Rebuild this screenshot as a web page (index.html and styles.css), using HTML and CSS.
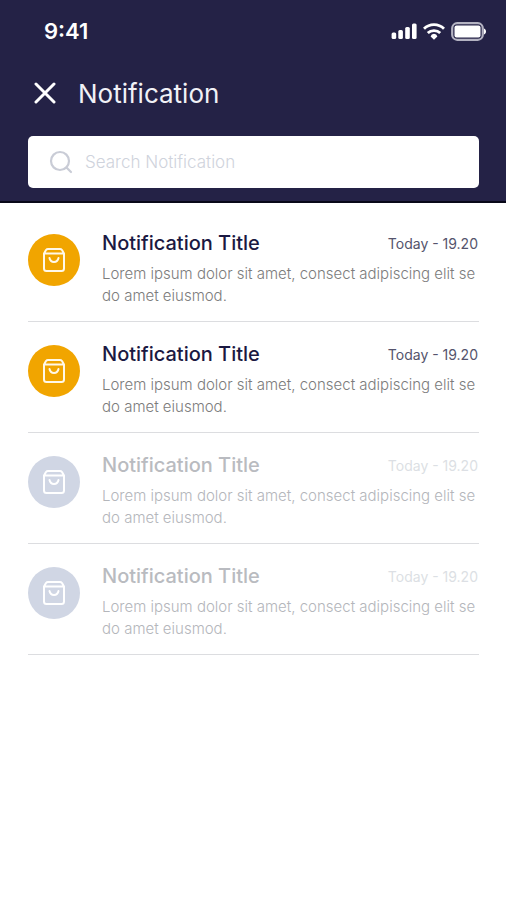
FILE: index.html
```html
<!DOCTYPE html>
<html lang="en">
<head>
<meta charset="utf-8">
<meta name="viewport" content="width=device-width, initial-scale=1">
<title>Notification</title>
<link rel="stylesheet" href="styles.css">
</head>
<body>
<svg class="defs" width="0" height="0" aria-hidden="true">
  <symbol id="bag" viewBox="0 0 24 26">
    <path d="M2 6.500 4 3Q4.800 2 6 2H18Q19.200 2 20 3L22 6.500V21.500Q22 24 19.500 24H4.500Q2 24 2 21.500ZM2.500 6.500H21.500M7.500 11C8.500 16.200 15.500 16.200 16.500 11" fill="none" stroke="currentColor" stroke-width="2" stroke-linecap="round" stroke-linejoin="round"/>
  </symbol>
</svg>
<header class="header">
  <div class="status">
    <span class="clock">9:41</span>
    <svg class="indicators" viewBox="0 0 96 20" aria-hidden="true">
      <g fill="#fff">
        <rect x="0.600" y="11.500" width="4.600" height="6.500" rx="1.500"/>
        <rect x="7.300" y="9" width="4.600" height="9" rx="1.500"/>
        <rect x="14.200" y="6" width="4.600" height="12" rx="1.500"/>
        <rect x="21" y="2.500" width="4.600" height="15.500" rx="1.500"/>
        <path d="M43 12.800a3.500 3.500 0 0 1 3.400 2.600L43 18.700l-3.400-3.300A3.500 3.500 0 0 1 43 12.800Z"/>
        <rect x="63.500" y="4.500" width="26" height="12" rx="2"/>
        <path d="M93 7.500c2.700.8 2.700 5.200 0 6Z"/>
      </g>
      <path d="M33 7.800C38.500 2.300 47.500 2.300 53 7.800M36.800 12C40 8.800 46 8.800 49.200 12" fill="none" stroke="#fff" stroke-width="2.800"/>
      <rect x="61.200" y="2.200" width="30.600" height="16.600" rx="5" fill="none" stroke="#b4b3c2" stroke-width="2.200"/>
    </svg>
  </div>
  <div class="heading">
    <button class="close" type="button" aria-label="Close">
      <svg viewBox="0 0 22 22" aria-hidden="true"><path d="M2 2 20 20M20 2 2 20" stroke="#fff" stroke-width="3" stroke-linecap="round"/></svg>
    </button>
    <h1>Notification</h1>
  </div>
  <label class="search">
    <svg viewBox="0 0 24 24" fill="none" stroke="#c9ccd6" stroke-width="2.200" stroke-linecap="round" aria-hidden="true"><circle cx="11" cy="11" r="9"/><path d="m17.500 17.500 4.500 4.500"/></svg>
    <input type="search" placeholder="Search Notification" aria-label="Search Notification">
  </label>
</header>
<main>
  <ul class="list">
    <li class="item">
      <span class="badge"><svg aria-hidden="true"><use href="#bag"/></svg></span>
      <div class="content">
        <div class="top"><h2>Notification Title</h2><time>Today - 19.20</time></div>
        <p>Lorem ipsum dolor sit amet, consect adipiscing elit se do amet eiusmod.</p>
      </div>
    </li>
    <li class="item">
      <span class="badge"><svg aria-hidden="true"><use href="#bag"/></svg></span>
      <div class="content">
        <div class="top"><h2>Notification Title</h2><time>Today - 19.20</time></div>
        <p>Lorem ipsum dolor sit amet, consect adipiscing elit se do amet eiusmod.</p>
      </div>
    </li>
    <li class="item read">
      <span class="badge"><svg aria-hidden="true"><use href="#bag"/></svg></span>
      <div class="content">
        <div class="top"><h2>Notification Title</h2><time>Today - 19.20</time></div>
        <p>Lorem ipsum dolor sit amet, consect adipiscing elit se do amet eiusmod.</p>
      </div>
    </li>
    <li class="item read">
      <span class="badge"><svg aria-hidden="true"><use href="#bag"/></svg></span>
      <div class="content">
        <div class="top"><h2>Notification Title</h2><time>Today - 19.20</time></div>
        <p>Lorem ipsum dolor sit amet, consect adipiscing elit se do amet eiusmod.</p>
      </div>
    </li>
  </ul>
</main>
</body>
</html>
```
FILE: styles.css
```css
* {
  box-sizing: border-box;
}

body {
  margin: 0;
  background: #fff;
  font-family: Inter, "Liberation Sans", sans-serif;
}

h1, h2, p, ul {
  margin: 0;
  padding: 0;
}

.defs {
  position: absolute;
}

.header {
  padding: 16px 27px 13px 28px;
  background: #242246;
  border-bottom: 2px solid #080818;
}

.status {
  display: flex;
  align-items: center;
  justify-content: space-between;
  height: 30px;
  margin: 0 -8px 0 16px;
}

.clock {
  color: #fff;
  font-size: 22px;
  font-weight: 600;
}

.indicators {
  width: 96px;
  height: 20px;
}

.heading {
  display: flex;
  align-items: center;
  gap: 22px;
  height: 40px;
  margin: 27px 0 23px 6px;
}

.close {
  display: flex;
  padding: 0;
  border: 0;
  background: none;
}

.close svg {
  width: 22px;
  height: 22px;
}

h1 {
  color: #f1f1f6;
  font-size: 26px;
  font-weight: 400;
}

.search {
  display: flex;
  align-items: center;
  gap: 12px;
  height: 52px;
  padding: 0 21px;
  border-radius: 5px;
  background: #fff;
}

.search svg {
  flex: none;
  width: 24px;
  height: 24px;
}

.search input {
  flex: 1;
  min-width: 0;
  padding: 0;
  border: 0;
  outline: 0;
  background: none;
  color: #242246;
  font: 300 17px Inter, "Liberation Sans", sans-serif;
}

.search input::placeholder {
  color: #cfd3dc;
}

.list {
  padding: 8px 27px 0 28px;
  list-style: none;
}

.item {
  display: flex;
  gap: 22px;
  padding: 18px 0 14px;
  border-bottom: 1px solid #dcdde0;
  color: #1b1942;
}

.badge {
  display: flex;
  flex: none;
  align-items: center;
  justify-content: center;
  width: 52px;
  height: 52px;
  margin-top: 5px;
  border-radius: 50%;
  background: #f1a500;
  color: #fff8e8;
}

.badge svg {
  width: 24px;
  height: 26px;
}

.content {
  flex: 1;
  min-width: 0;
}

.top {
  display: flex;
  align-items: center;
  justify-content: space-between;
  height: 28px;
  margin-bottom: 6px;
}

h2 {
  font-size: 20px;
  font-weight: 500;
}

time {
  padding-right: 1px;
  color: #55546c;
  font-size: 14px;
}

.item p {
  color: #7c7c7c;
  font-size: 15px;
  font-weight: 300;
  line-height: 22px;
}

.item.read h2 {
  color: #b9bbc0;
}

.item.read time {
  color: #dcdfe4;
}

.item.read p {
  color: #b4b6bb;
}

.item.read .badge {
  background: #d0d6e4;
  color: #fff;
}
```
